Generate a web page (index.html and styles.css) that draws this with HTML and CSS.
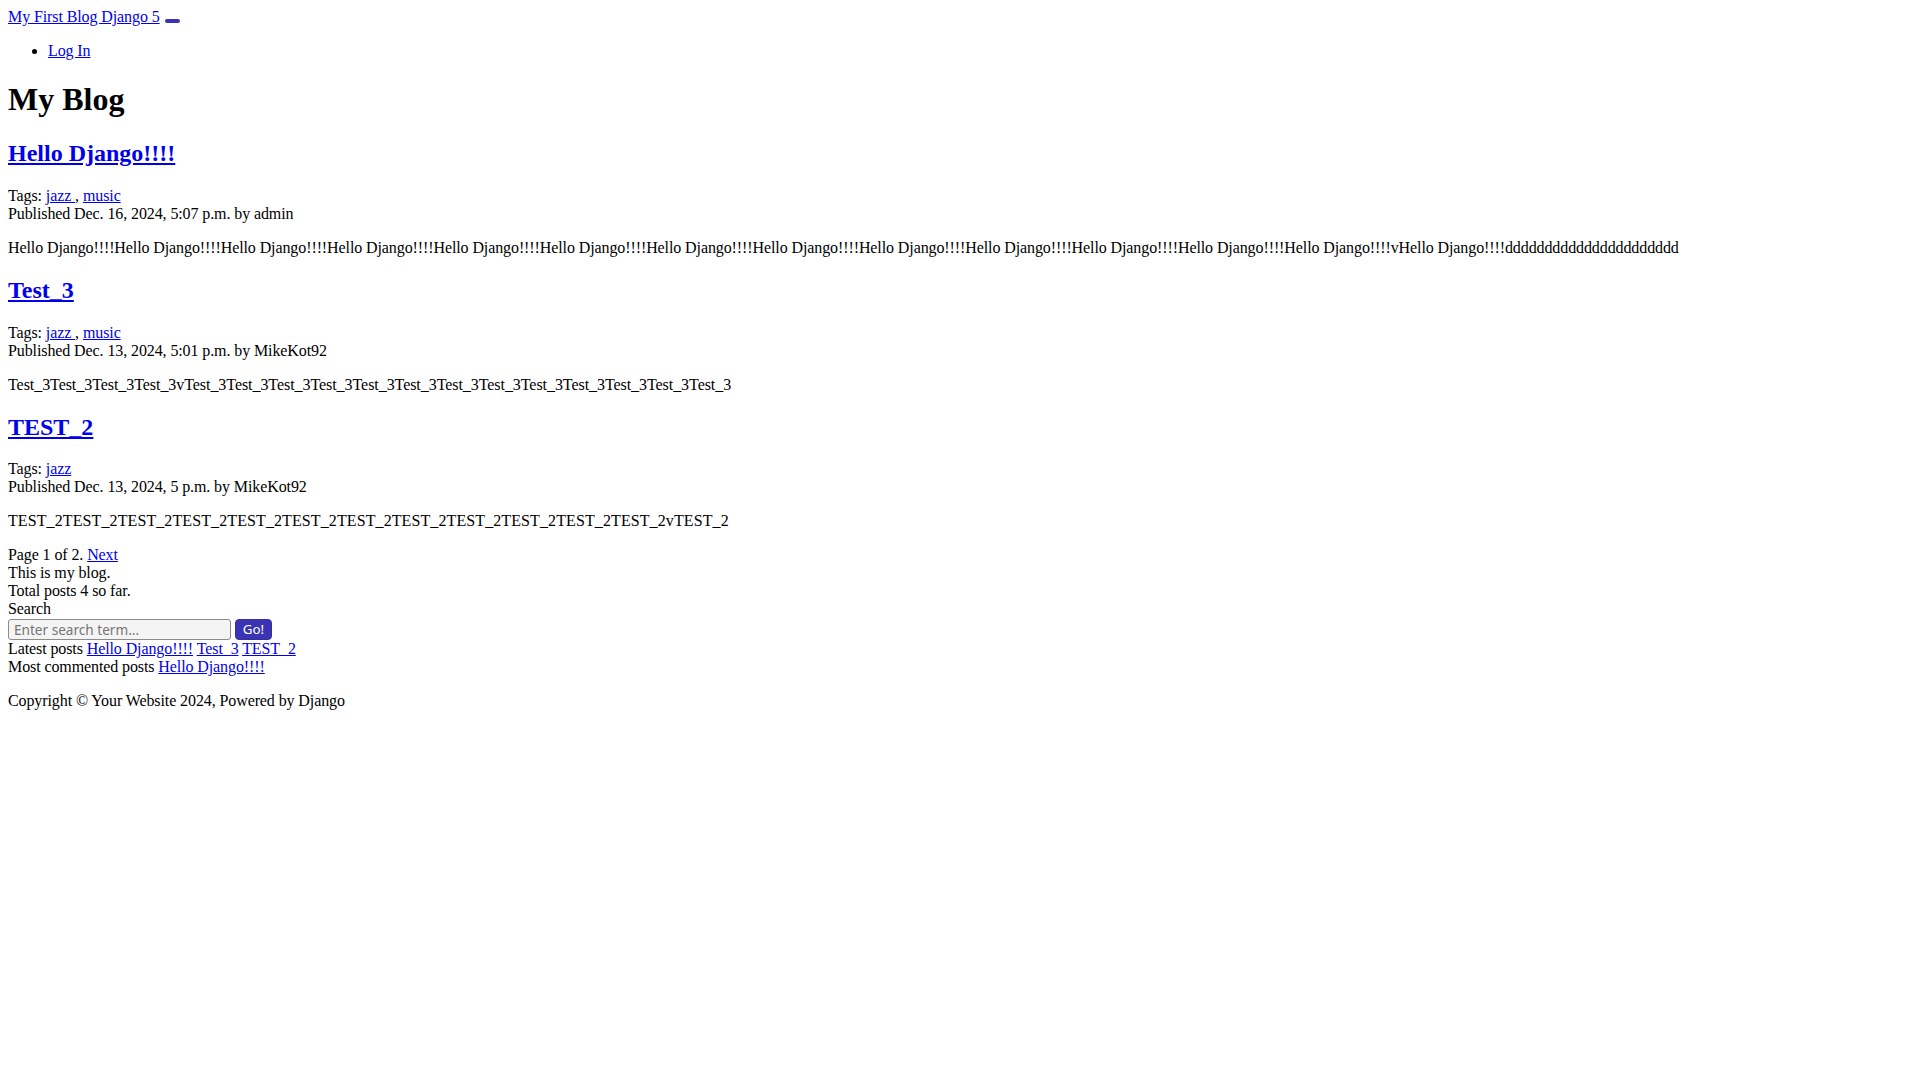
FILE: index.html
```html
<!DOCTYPE html>
<html lang="en">
<head>
<meta charset="utf-8">
<title>My Blog</title>
<link rel="stylesheet" href="styles.css">
</head>
<body>
<nav class="navbar">
  <a class="brand" href="#">My First Blog Django 5</a>
  <button class="toggler" type="button" aria-label="Toggle navigation"></button>
  <ul class="nav-list">
    <li><a href="#">Log In</a></li>
  </ul>
</nav>

<main class="content">
  <h1>My Blog</h1>

  <h2><a href="#">Hello Django!!!!</a></h2>
  <p class="meta">Tags: <a href="#">jazz </a>, <a href="#">music</a><br>Published Dec. 16, 2024, 5:07 p.m. by admin</p>
  <p>Hello Django!!!!Hello Django!!!!Hello Django!!!!Hello Django!!!!Hello Django!!!!Hello Django!!!!Hello Django!!!!Hello Django!!!!Hello Django!!!!Hello Django!!!!Hello Django!!!!Hello Django!!!!Hello Django!!!!vHello Django!!!!dddddddddddddddddddddd</p>

  <h2><a href="#">Test_3</a></h2>
  <p class="meta">Tags: <a href="#">jazz </a>, <a href="#">music</a><br>Published Dec. 13, 2024, 5:01 p.m. by MikeKot92</p>
  <p class="body-mixed">Test_3Test_3Test_3Test_3vTest_3Test_3Test_3Test_3Test_3Test_3Test_3Test_3Test_3Test_3Test_3Test_3Test_3</p>

  <h2><a href="#">TEST_2</a></h2>
  <p class="meta">Tags: <a href="#">jazz</a><br>Published Dec. 13, 2024, 5 p.m. by MikeKot92</p>
  <p class="body-caps">TEST_2TEST_2TEST_2TEST_2TEST_2TEST_2TEST_2TEST_2TEST_2TEST_2TEST_2TEST_2vTEST_2</p>

  <div class="pagination">Page 1 of 2. <a href="#">Next</a></div>
</main>

<aside class="sidebar">
  <div>This is my blog.</div>
  <div>Total posts 4 so far.</div>
  <div>Search</div>
  <form class="search" onsubmit="return false;">
    <input class="search-input" type="text" placeholder="Enter search term...">
    <button class="search-btn" type="submit">Go!</button>
  </form>
  <div>Latest posts <a href="#">Hello Django!!!!</a> <a href="#">Test_3</a> <a href="#">TEST_2</a></div>
  <div>Most commented posts <a href="#">Hello Django!!!!</a></div>
</aside>

<footer class="footer">
  <p>Copyright © Your Website 2024, Powered by Django</p>
</footer>
</body>
</html>
```

FILE: styles.css
```css
html, body {
  background: #ffffff;
}

body {
  margin: 8px;
  font-family: "Liberation Serif", "Times New Roman", serif;
  font-size: 16px;
  letter-spacing: -0.1px;
  color: #000000;
}

a {
  color: #0000ee;
  text-decoration: underline;
}

.navbar {
  display: block;
}

.toggler {
  display: inline-block;
  width: 15px;
  height: 4px;
  padding: 0;
  margin: 0 0 0 1px;
  border: none;
  border-radius: 2px;
  background: #3a34b4;
  vertical-align: -1px;
}

.nav-list {
  margin: 16px 0;
  padding-left: 40px;
}

h1 {
  font-size: 32px;
  margin: 21.44px 0;
  letter-spacing: 0;
}

h2 {
  font-size: 24px;
  margin: 19.92px 0;
  letter-spacing: 0;
}

p {
  margin: 16px 0;
}

.body-mixed {
  letter-spacing: -0.06px;
}

.body-caps {
  letter-spacing: 0.1px;
}

.search {
  display: flex;
  align-items: center;
  gap: 4px;
  margin: 0;
  height: 22px;
}

.search-input {
  box-sizing: border-box;
  width: 223px;
  height: 21px;
  margin: 0;
  padding: 0 5px;
  font-family: "Noto Sans", "Liberation Sans", sans-serif;
  font-size: 13.6px;
  line-height: 19px;
  letter-spacing: 0;
  color: #000;
  background: #f4f4f4;
  border: 1px solid #8a8a8a;
  border-radius: 3px;
}

.search-input::placeholder {
  color: #757575;
}

.search-btn {
  box-sizing: border-box;
  height: 21px;
  width: 37px;
  margin: 0;
  padding: 0 4px;
  font-family: "Noto Sans", "Liberation Sans", sans-serif;
  font-size: 13.333px;
  line-height: 19px;
  letter-spacing: 0;
  color: #ffffff;
  background: #3a34b4;
  border: 1px solid #34309f;
  border-radius: 4px;
}
```
